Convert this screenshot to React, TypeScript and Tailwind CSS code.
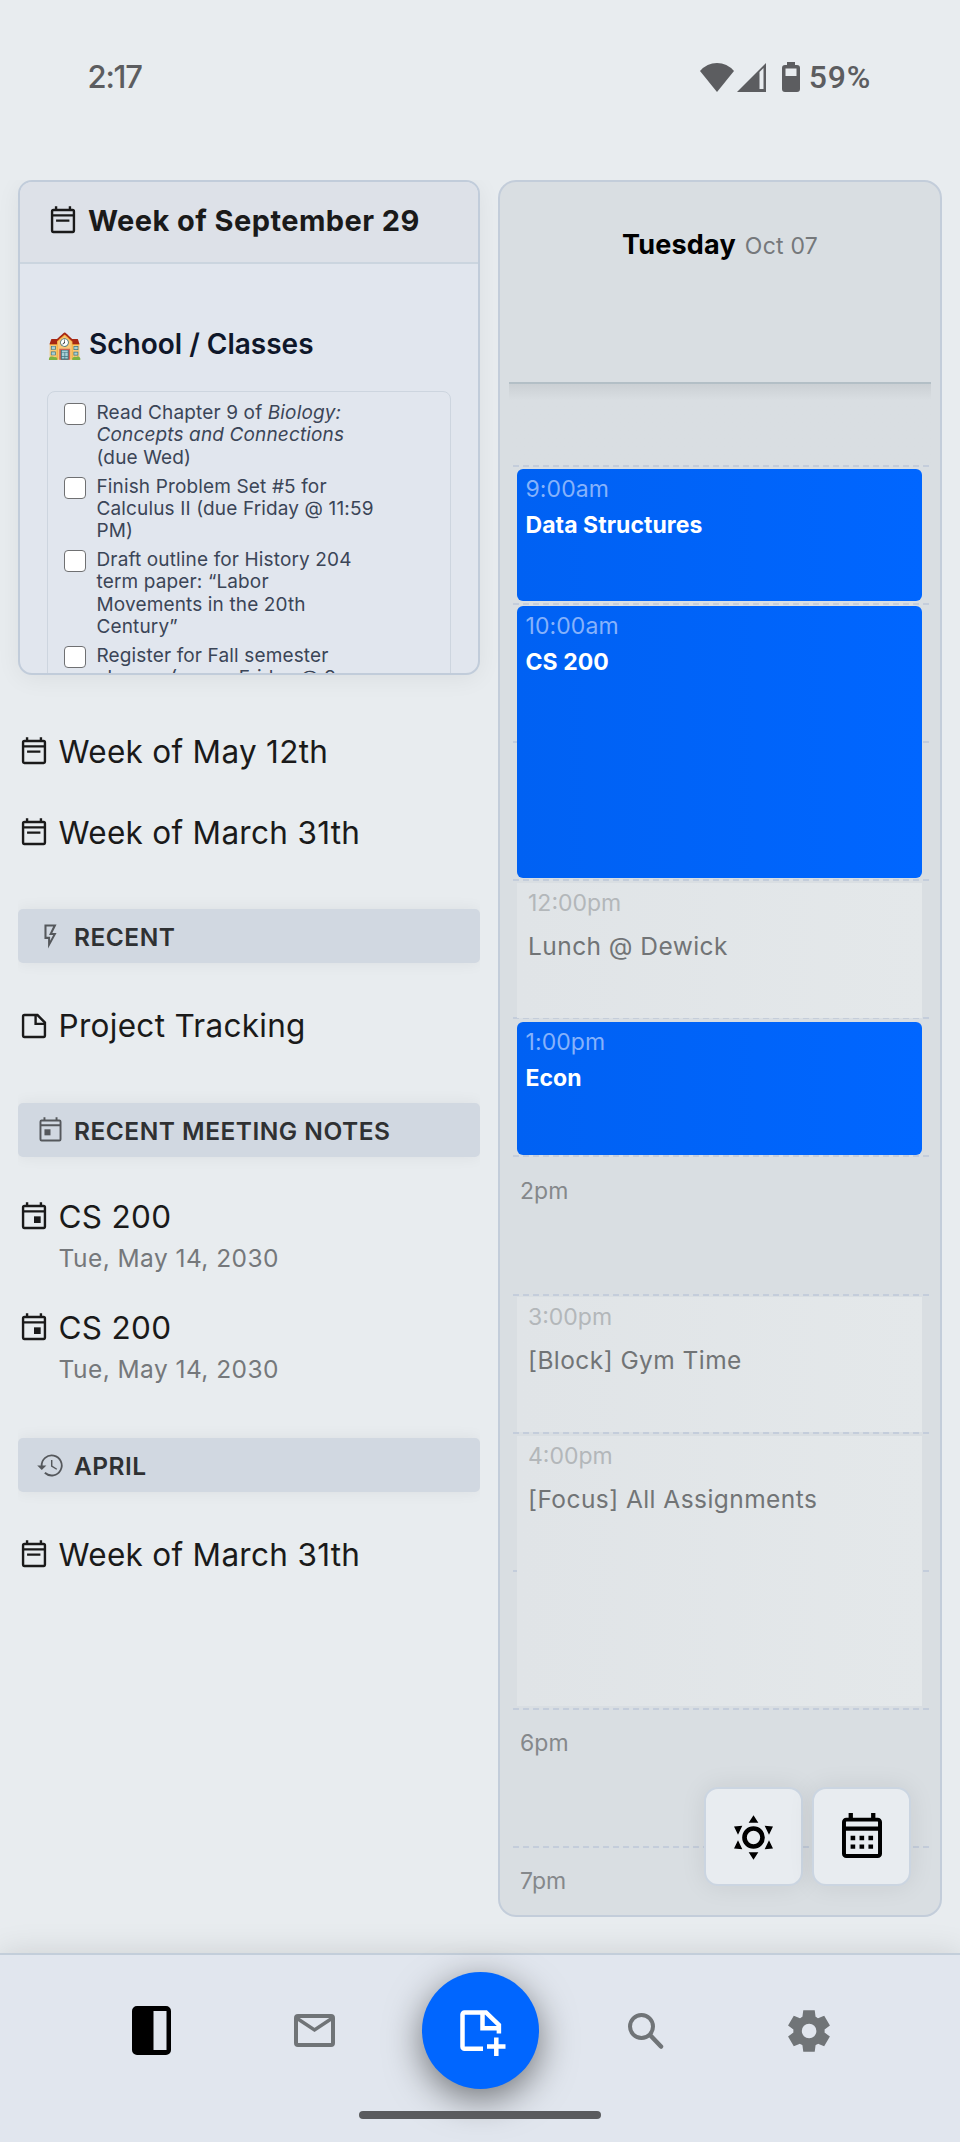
import type { ReactNode } from 'react'

interface CalEvent {
  time: string
  title: string
  kind: 'class' | 'block'
  size: string
}

interface HourSlot {
  label?: string
  event?: CalEvent
}

const TASKS: { id: string; text: ReactNode }[] = [
  {
    id: 'bio',
    text: (
      <>
        Read Chapter 9 of <em>Biology:</em>
        <br />
        <em>Concepts and Connections</em>
        <br />
        (due Wed)
      </>
    ),
  },
  {
    id: 'calc',
    text: (
      <>
        Finish Problem Set #5 for
        <br />
        Calculus II (due Friday @ 11:59
        <br />
        PM)
      </>
    ),
  },
  {
    id: 'history',
    text: (
      <>
        Draft outline for History 204
        <br />
        term paper: “Labor
        <br />
        Movements in the 20th
        <br />
        Century”
      </>
    ),
  },
  {
    id: 'register',
    text: (
      <>
        Register for Fall semester
        <br />
        classes (opens Friday @ 9
      </>
    ),
  },
]

const SLOTS: HourSlot[] = [
  { event: { time: '9:00am', title: 'Data Structures', kind: 'class', size: 'mt-[2px] h-[132px]' } },
  { event: { time: '10:00am', title: 'CS 200', kind: 'class', size: 'mt-[1px] h-[272px]' } },
  {},
  { event: { time: '12:00pm', title: 'Lunch @ Dewick', kind: 'block', size: 'mt-[2px] h-[135px]' } },
  { event: { time: '1:00pm', title: 'Econ', kind: 'class', size: 'mt-[3px] h-[133px]' } },
  { label: '2pm' },
  { event: { time: '3:00pm', title: '[Block] Gym Time', kind: 'block', size: 'mt-[1.8px] h-[135px]' } },
  { event: { time: '4:00pm', title: '[Focus] All Assignments', kind: 'block', size: 'mt-[2.5px] h-[270px]' } },
  {},
  { label: '6pm' },
  { label: '7pm' },
]

export default function App() {
  return (
    <div className="flex h-[2142px] w-[960px] flex-col overflow-hidden bg-[#e8ecef] font-['Inter','Liberation_Sans',sans-serif] text-[#1a1a1a]">
      <StatusBar />
      <main className="flex h-[1773px] shrink-0 items-start gap-[18px] overflow-hidden pl-[18px]">
        <NotesColumn />
        <DayPanel />
      </main>
      <BottomNav />
    </div>
  )
}

function StatusBar() {
  return (
    <header className="flex h-[180px] shrink-0 items-start justify-between pt-[57px] pr-[89px] pl-[87.5px] text-[#5c5d60]">
      <span className="text-[31px] leading-[40px] font-medium tracking-[-1.2px]">2:17</span>
      <div className="flex h-[40px] items-center">
        <svg className="h-[29px] w-[34px]" viewBox="0 0 34 29" fill="currentColor">
          <path d="M17 29 0 8Q7 0 17 0T34 8z" />
        </svg>
        <svg className="ml-[3px] h-[29px] w-[29px]" viewBox="0 0 29 29" fill="currentColor">
          <path d="M0 29 29 0v29z" />
          <path d="M22.500 9 26.500 5v21h-4z" className="fill-[#e8ecef]" />
        </svg>
        <svg className="ml-[16px] h-[30px] w-[18px]" viewBox="0 0 18 30" fill="currentColor">
          <path
            fillRule="evenodd"
            d="M5 0h8v3h2a3 3 0 0 1 3 3v21a3 3 0 0 1-3 3H3a3 3 0 0 1-3-3V6a3 3 0 0 1 3-3h2zM3.500 6.500v7.500h11V6.500z"
          />
        </svg>
        <span className="ml-[9px] font-['Roboto',sans-serif] text-[32px] leading-[40px] font-medium tracking-[0.8px]">
          59%
        </span>
      </div>
    </header>
  )
}

function NotesColumn() {
  return (
    <div className="flex w-[462px] shrink-0 flex-col">
      <WeekCard />
      <div className="flex flex-col overflow-x-clip">
        <NoteRow className="mt-[57px]" icon={<CalendarTextIcon />} title="Week of May 12th" />
        <NoteRow className="mt-[41px]" icon={<CalendarTextIcon />} title="Week of March 31th" />
        <SectionHeading className="mt-[56px]" icon={<BoltIcon />} title="RECENT" />
        <NoteRow className="mt-[43px]" icon={<NoteIcon />} title="Project Tracking" />
        <SectionHeading className="mt-[57px]" icon={<TodayIcon />} title="RECENT MEETING NOTES" />
        <NoteRow className="mt-[40px]" icon={<EventIcon />} title="CS 200" date="Tue, May 14, 2030" />
        <NoteRow className="mt-[34px]" icon={<EventIcon />} title="CS 200" date="Tue, May 14, 2030" />
        <SectionHeading className="mt-[53px]" icon={<HistoryIcon />} title="APRIL" />
        <NoteRow className="mt-[43px]" icon={<CalendarTextIcon />} title="Week of March 31th" />
      </div>
    </div>
  )
}

function WeekCard() {
  return (
    <section className="flex h-[495px] flex-col overflow-hidden rounded-[14px] border-2 border-[#c1ccda] bg-[#e1e6ee] shadow-[0_4px_24px_rgba(0,0,0,0.06)]">
      <div className="flex h-[82px] shrink-0 items-center gap-[9px] border-b-2 border-[#cbd5df] bg-[#dde1e8] pb-[2px] pl-[27px]">
        <CalendarTextIcon />
        <h2 className="text-[29px] leading-[40px] font-bold tracking-[0.44px]">Week of September 29</h2>
      </div>
      <div className="flex flex-col px-[27px] pt-[60px]">
        <h3 className="flex items-center gap-[8px] text-[28px] leading-[40px] font-semibold text-[#0f172a]">
          <span className="w-[34px] text-[28px]">🏫</span>
          School / Classes
        </h3>
        <ul className="mt-[27px] flex h-[400px] w-[404px] flex-col gap-[6.7px] rounded-[8px] border border-[#cdd5df] pt-[10px] pl-[16px]">
          {TASKS.map((task) => (
            <li key={task.id} className="flex gap-[10.5px]">
              <span className="mt-[1px] size-[22px] shrink-0 rounded-[4px] border border-[#6f7072] bg-white" />
              <p className="text-[19px] leading-[22.3px] tracking-[0.14px] text-[#3b4557]">{task.text}</p>
            </li>
          ))}
        </ul>
      </div>
    </section>
  )
}

function NoteRow({ icon, title, date, className }: { icon: ReactNode; title: string; date?: string; className: string }) {
  return (
    <div className={className}>
      <div className="flex h-[40px] items-center gap-[8.5px] text-[31.5px] leading-[40px] tracking-[0.3px] whitespace-nowrap">
        {icon}
        <span>{title}</span>
      </div>
      {date && (
        <p className="mt-[5px] pl-[40.5px] text-[24.5px] leading-[32px] tracking-[0.45px] text-[#75787b]">{date}</p>
      )}
    </div>
  )
}

function SectionHeading({ icon, title, className }: { icon: ReactNode; title: string; className: string }) {
  return (
    <div
      className={`flex h-[54px] shrink-0 items-center rounded-[5px] bg-[#d1d8e1] pl-[18px] shadow-[0_0_16px_rgba(0,0,0,0.06)] ${className}`}
    >
      <span className="text-[#55585c]">{icon}</span>
      <h4 className="pt-[1.5px] pl-[9px] text-[24.5px] leading-[32px] font-semibold tracking-[0.49px] text-[#2f3133]">
        {title}
      </h4>
    </div>
  )
}

function DayPanel() {
  return (
    <section className="flex h-[1737px] w-[444px] shrink-0 flex-col overflow-hidden rounded-[18px] border-2 border-[#c3cdda] bg-[#d9dee2] px-[9px]">
      <div className="flex h-[202px] shrink-0 items-baseline justify-center gap-[9px] border-b-2 border-[#b3bfc6] pt-[45px]">
        <span className="text-[27px] leading-[36px] font-bold tracking-[0.2px] text-black">Tuesday</span>
        <span className="text-[23px] leading-[36px] tracking-[0.24px] text-[#75787b]">Oct 07</span>
      </div>
      <div className="h-[81px] shrink-0 bg-linear-to-b from-[#cbd0d4] to-[#d9dee2] to-[16px]" />
      <div className="flex flex-col pr-[2px] pl-[4px]">
        {SLOTS.map((slot, idx) => (
          <div key={idx} className="h-[138.1px] shrink-0 border-t-2 border-dashed border-[#c4cddb]">
            {slot.label && (
              <p className="pt-[17.4px] pl-[7px] text-[23px] leading-[32px] tracking-[0.05px] text-[#85888b]">
                {slot.label}
              </p>
            )}
            {slot.event && <EventBlock event={slot.event} />}
          </div>
        ))}
      </div>
      <div className="relative z-20 -mt-[197px] flex shrink-0 justify-end gap-[9px] pr-[20px]">
        <FloatingButton label="Day view">
          <SunIcon />
        </FloatingButton>
        <FloatingButton label="Pick a date">
          <MonthIcon />
        </FloatingButton>
      </div>
    </section>
  )
}

function EventBlock({ event }: { event: CalEvent }) {
  if (event.kind === 'class') {
    return (
      <div
        className={`relative z-10 mr-[7px] ml-[4px] rounded-[6px] bg-linear-to-r from-[#0061f3] to-[#0066ff] pt-[3.6px] pl-[8.5px] ${event.size}`}
      >
        <p className="text-[23px] leading-[32px] tracking-[0.08px] text-[#86b2fb]">{event.time}</p>
        <p className="mt-[4px] text-[23px] leading-[32px] font-bold tracking-[0.05px] text-white">{event.title}</p>
      </div>
    )
  }
  return (
    <div className={`relative z-10 mr-[7px] ml-[4px] bg-linear-to-r from-[#e0e4e7] to-[#e4e8ea] pt-[3.6px] pl-[11px] ${event.size}`}>
      <p className="text-[23px] leading-[32px] text-[#b3b7ba]">{event.time}</p>
      <p className="mt-[11.4px] text-[24.5px] leading-[32px] tracking-[0.44px] text-[#717476]">{event.title}</p>
    </div>
  )
}

function FloatingButton({ label, children }: { label: string; children: ReactNode }) {
  return (
    <button
      type="button"
      aria-label={label}
      className="flex size-[99px] items-center justify-center rounded-[14px] border-2 border-[#cbd5e1] bg-[#e8ecf0] text-black shadow-[0_0_26px_rgba(0,0,0,0.08)]"
    >
      {children}
    </button>
  )
}

function BottomNav() {
  return (
    <footer className="relative flex h-[189px] shrink-0 flex-col items-center border-t-2 border-[#c3ceda] bg-[#e1e6ee] shadow-[0_0_30px_rgba(0,0,0,0.12)]">
      <nav className="flex h-[151px] items-center text-[#707477]">
        <span className="flex w-[163px] justify-center text-black">
          <svg className="h-[49px] w-[39px]" viewBox="0 0 39 49" fill="currentColor">
            <path
              fillRule="evenodd"
              d="M5 0h29a5 5 0 0 1 5 5v39a5 5 0 0 1-5 5H5a5 5 0 0 1-5-5V5a5 5 0 0 1 5-5zM21.500 5v39h13V5z"
            />
          </svg>
        </span>
        <span className="flex w-[163px] justify-center">
          <svg className="h-[33px] w-[41px]" viewBox="0 0 41 33" fill="none" stroke="currentColor">
            <rect x="2" y="2" width="37" height="29" rx="2" strokeWidth="4" />
            <path d="M2.500 4 20.500 16 38.500 4" strokeWidth="3.500" />
          </svg>
        </span>
        <button
          type="button"
          aria-label="New note"
          className="mx-[26px] flex size-[117px] items-center justify-center rounded-full bg-[#0066ff] text-white shadow-[0_10px_36px_rgba(0,0,0,0.5)]"
        >
          <svg className="mt-[4px] ml-[5px] size-[46px]" viewBox="0 0 46 46" fill="none" stroke="currentColor" strokeWidth="4.500">
            <path d="M23 38.700H4.500a2 2 0 0 1-2-2V4.500a2 2 0 0 1 2-2H26L38.900 15V23.500" />
            <path d="M22.500 2.500v15.700h16" />
            <path d="M36.300 27.500v18.500M27 36.500h18.500" />
          </svg>
        </button>
        <span className="flex w-[163px] justify-center">
          <svg className="size-[36px]" viewBox="0 0 36 36" fill="none" stroke="currentColor" strokeWidth="4">
            <circle cx="13.500" cy="13.500" r="11.500" />
            <path d="M23 23 33 33.500" strokeWidth="4.500" strokeLinecap="round" />
          </svg>
        </span>
        <span className="flex w-[163px] justify-center">
          <svg className="size-[50px]" viewBox="0 0 24 24" fill="currentColor">
            <path d="m9.250 22-.4-3.200q-.325-.125-.612-.3t-.563-.375L4.700 19.375l-2.750-4.750 2.575-1.950Q4.500 12.500 4.500 12.338v-.675q0-.163.025-.338L1.950 9.375l2.750-4.750 2.975 1.250q.275-.2.575-.375t.6-.3l.4-3.200h5.500l.4 3.200q.325.125.613.3t.562.375l2.975-1.250 2.750 4.750-2.575 1.950q.025.175.025.338v.674q0 .163-.05.338l2.575 1.950-2.750 4.750-2.950-1.250q-.275.2-.575.375t-.6.3l-.4 3.200zm2.800-6.500q1.450 0 2.475-1.025T15.550 12t-1.025-2.475T12.050 8.500q-1.475 0-2.488 1.025T8.550 12t1.013 2.475T12.050 15.500" />
          </svg>
        </span>
      </nav>
      <div className="mt-[5px] h-[8px] w-[242px] shrink-0 rounded-full bg-[#5a5b5e]" />
    </footer>
  )
}

function CalendarTextIcon() {
  return (
    <svg className="size-[32px] shrink-0" viewBox="0 0 24 24" fill="none" stroke="currentColor" strokeWidth="1.800">
      <rect x="3.800" y="3.800" width="16.400" height="16.400" rx="1" />
      <path d="M3.800 7.800h16.400M6.800 1v3M17.200 1v3M6.800 11.700h10" />
    </svg>
  )
}

function EventIcon() {
  return (
    <svg className="size-[32px] shrink-0" viewBox="0 0 24 24" fill="none" stroke="currentColor" strokeWidth="1.800">
      <rect x="3.800" y="3.800" width="16.400" height="16.400" rx="1" />
      <path d="M3.800 7.800h16.400M6.800 1v3M17.200 1v3" />
      <path d="M12 11.500h5v5h-5z" fill="currentColor" stroke="none" />
    </svg>
  )
}

function NoteIcon() {
  return (
    <svg className="size-[32px] shrink-0" viewBox="0 0 24 24" fill="none" stroke="currentColor" strokeWidth="1.800">
      <path d="M14.600 3.800H4.800a1 1 0 0 0-1 1v14.400a1 1 0 0 0 1 1h14.400a1 1 0 0 0 1-1V9.400z" />
      <path d="M13.200 3.800v6.600h7" />
    </svg>
  )
}

function TodayIcon() {
  return (
    <svg className="size-[29px]" viewBox="0 0 24 24" fill="none" stroke="currentColor" strokeWidth="1.600">
      <rect x="3.700" y="3.700" width="16.600" height="16.600" rx="1" />
      <path d="M3.700 7.700h16.600M7 1v3M17 1v3" />
      <path d="M7 11h5v5H7z" fill="currentColor" stroke="none" />
    </svg>
  )
}

function BoltIcon() {
  return (
    <svg className="size-[29px]" viewBox="0 0 24 24" fill="currentColor">
      <path d="M7 2H17L13.500 9H17L10 22V14H7V2M8.700 3.700V12.300H11.700V15.500L14.200 10.700H10.800L14.200 3.700Z" />
    </svg>
  )
}

function HistoryIcon() {
  return (
    <svg className="size-[29px]" viewBox="0 0 24 24" fill="none" stroke="currentColor" strokeWidth="1.500">
      <path d="M4.700 12.500A8.300 8.300 0 1 1 7.300 18" />
      <path d="M13 7.500v5l4.200 2.600" strokeWidth="1.200" />
      <path d="M1 12h7.600l-3.800 3.700z" fill="currentColor" stroke="none" />
    </svg>
  )
}

function SunIcon() {
  return (
    <svg className="mt-[2px] h-[45px] w-[39px]" viewBox="0 0 117 134" fill="currentColor">
      <circle cx="58.500" cy="67" r="27" fill="none" stroke="currentColor" strokeWidth="14" />
      <path d="M58.500 0 73 23H44zM58.500 134 73 111H44zM0 34l25-2-13 27zM117 34l-25-2 13 27zM0 100l25 2-13-27zM117 100l-25 2 13-27z" />
    </svg>
  )
}

function MonthIcon() {
  return (
    <svg className="-mt-[3px] h-[45px] w-[40px]" viewBox="0 0 121 136" fill="currentColor">
      <rect x="6" y="20" width="109" height="110" rx="7" fill="none" stroke="currentColor" strokeWidth="12" />
      <path d="M6 41h109v13H6zM20 0h13v18H20zM88 0h13v18H88z" />
      <path d="M26 69h14v13H26zM53 69h14v13H53zM80 69h14v13H80zM26 95h14v13H26zM53 95h14v13H53zM80 95h14v13H80z" />
    </svg>
  )
}
